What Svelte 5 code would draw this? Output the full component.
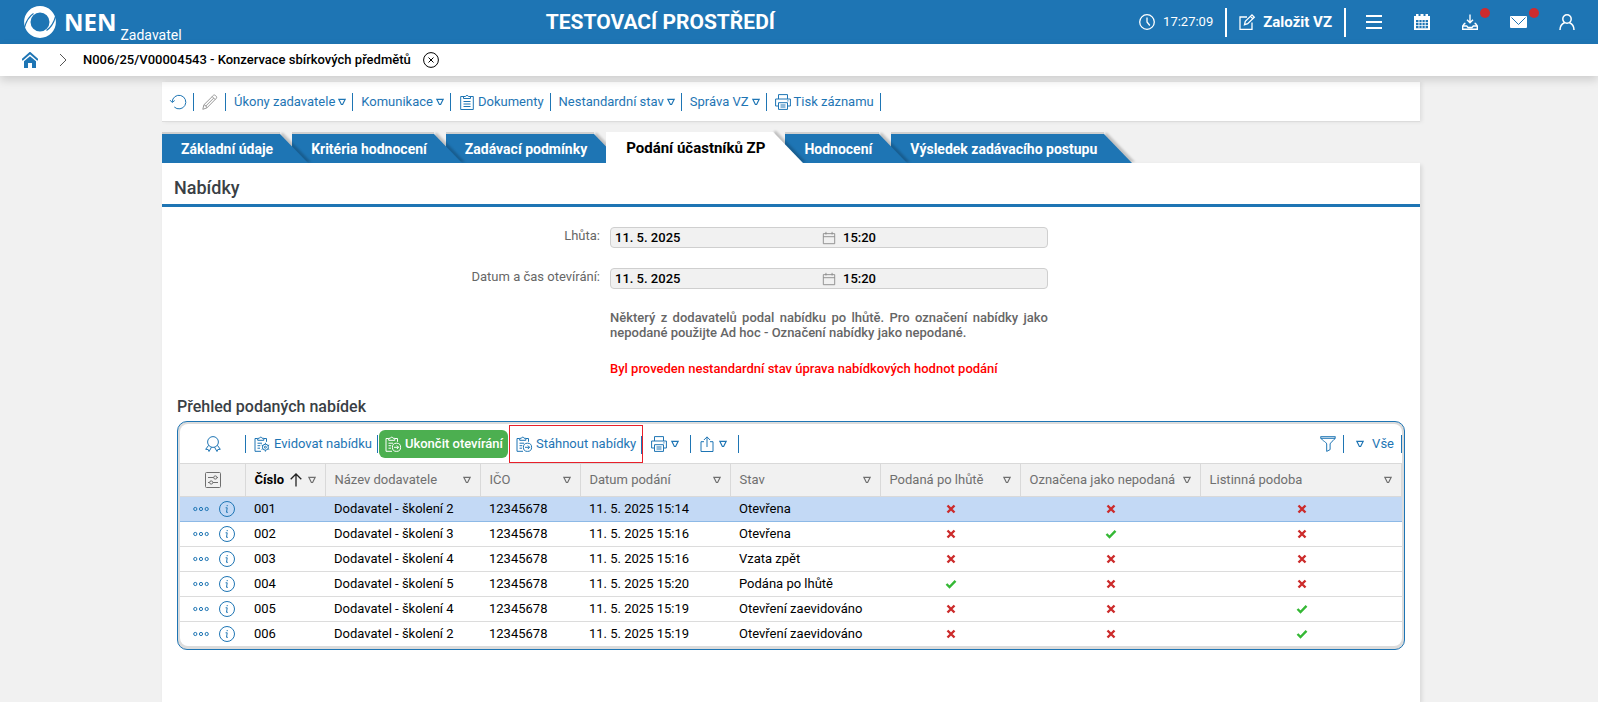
<script>
  const tabs = [
    { label: 'Základní údaje' },
    { label: 'Kritéria hodnocení' },
    { label: 'Zadávací podmínky' },
    { label: 'Podání účastníků ZP', active: true },
    { label: 'Hodnocení' },
    { label: 'Výsledek zadávacího postupu' }
  ];

  const actions = [
    { label: 'Úkony zadavatele', menu: true },
    { label: 'Komunikace', menu: true },
    { label: 'Dokumenty', icon: 'clipboard' },
    { label: 'Nestandardní stav', menu: true },
    { label: 'Správa VZ', menu: true },
    { label: 'Tisk záznamu', icon: 'printer' }
  ];

  const fields = [
    { id: 'lhuta', label: 'Lhůta:', date: '11. 5. 2025', time: '15:20' },
    { id: 'otevirani', label: 'Datum a čas otevírání:', date: '11. 5. 2025', time: '15:20' }
  ];

  const columns = [
    { label: 'Číslo', sorted: true },
    { label: 'Název dodavatele' },
    { label: 'IČO' },
    { label: 'Datum podání' },
    { label: 'Stav' },
    { label: 'Podaná po lhůtě' },
    { label: 'Označena jako nepodaná' },
    { label: 'Listinná podoba' }
  ];

  const rows = [
    { no: '001', name: 'Dodavatel - školení 2', ico: '12345678', date: '11. 5. 2025 15:14', state: 'Otevřena', flags: [false, false, false] },
    { no: '002', name: 'Dodavatel - školení 3', ico: '12345678', date: '11. 5. 2025 15:16', state: 'Otevřena', flags: [false, true, false] },
    { no: '003', name: 'Dodavatel - školení 4', ico: '12345678', date: '11. 5. 2025 15:16', state: 'Vzata zpět', flags: [false, false, false] },
    { no: '004', name: 'Dodavatel - školení 5', ico: '12345678', date: '11. 5. 2025 15:20', state: 'Podána po lhůtě', flags: [true, false, false] },
    { no: '005', name: 'Dodavatel - školení 4', ico: '12345678', date: '11. 5. 2025 15:19', state: 'Otevření zaevidováno', flags: [false, false, true] },
    { no: '006', name: 'Dodavatel - školení 2', ico: '12345678', date: '11. 5. 2025 15:19', state: 'Otevření zaevidováno', flags: [false, false, true] }
  ];

  let selected = $state('001');
</script>

{#snippet tri()}
  <svg class="tri" viewBox="0 0 8 8" width="8" height="8"><path d="M.8 1.300h6.400L4.600 6.500H3.400z" /></svg>
{/snippet}

{#snippet icon(name)}
  <svg class="icon" viewBox="0 0 16 16" width="16" height="16">
    {#if name === 'clipboard'}
      <path d="M5 2.500H1.700v13h12.600v-13H11M4.500 4.500v-2h2a1.600 1.600 0 0 1 3 0h2v2zM4.500 7.500h7M4.500 10h7M4.500 12.500h7" />
    {:else if name === 'printer'}
      <path d="M3.500 5V.6h9V5M3.500 12H.6V5h14.800v7h-2.900M3.500 8.700h9v6.700h-9zM5.500 11h5M5.500 13h5M12.300 6.900h1.200" />
    {:else if name === 'clip-gear'}
      <path d="M3.500 2.500H1v12.800h6M10 2.500h2.500v3.300M3.700 4.300v-2h1.600a1.500 1.500 0 0 1 2.900 0h1.600v2zM3.500 7.200h4.500M3.500 9.700h2.800M3.500 12.200h2.500" />
      <circle cx="11.400" cy="11.200" r="3" /><circle cx="11.400" cy="11.200" r="1" />
      <path d="M11.400 8.200V6.800M11.400 15.600v-1.400M8.800 9.700l-1.200-.7M15.200 13.400l-1.200-.7M8.800 12.700l-1.200.7M15.200 9l-1.200.7" />
    {:else if name === 'clip-arrow'}
      <path d="M3.500 2.500H1v12.800h6M10 2.500h2.500v3.300M3.700 4.300v-2h1.600a1.500 1.500 0 0 1 2.900 0h1.600v2zM3.500 7.200h4.500M3.500 9.700h2.800M3.500 12.200h2.500" />
      <circle cx="11.500" cy="11.300" r="4.100" /><path d="M9 11.300h4.500M11.800 9.500l1.800 1.800-1.800 1.800" />
    {:else if name === 'medal'}
      <circle cx="8" cy="6" r="5.400" />
      <path d="M3.600 9.300.7 13.300l2.500.2.800 2 2.500-4.300M12.400 9.300l2.900 4-2.500.2-.8 2-2.500-4.300" />
    {:else if name === 'share'}
      <path d="M5 5.700H2v9.800h12V5.700h-3M8 11V.9M4.900 4 8 .9 11.100 4" />
    {:else if name === 'filter'}
      <path d="M.6.7h14.800c0 3.600-4.600 4.700-5.300 7.200v5.700l-3.400 1.800V7.900C6 5.400.6 4.300.6.7zM.6 2.300h14.800" />
    {:else if name === 'refresh'}
      <path d="M2.200 8A6.800 6.800 0 1 1 4.300 13M.1 6.200l2.100 2.300 2.500-2" />
    {:else if name === 'pencil'}
      <path d="M.8 15.300l1.100-4.500L11.600 1.200c1-1 3.900 1.600 2.900 2.900L4.900 13.900zM10.200 2.600l3 3M1.900 10.800c1.500.3 2.700 1.500 3 3.100M3.500 12.300l8.200-8.200" />
    {:else if name === 'settings'}
      <rect x=".5" y=".5" width="15" height="15" rx="1" />
      <path d="M3 5.500h5.700M12 5.500h1M3 10.500h1.500M8 10.500h5" />
      <circle cx="10.300" cy="5.500" r="1.600" /><circle cx="6.200" cy="10.500" r="1.600" />
    {:else if name === 'info'}
      <circle cx="8" cy="8" r="7.500" />
      <path d="M6.600 6.800h1.600l-.7 4.500h1.400M8.200 4v1.200" />
    {:else if name === 'dots'}
      <circle cx="2.300" cy="8" r="1.600" /><circle cx="8" cy="8" r="1.600" /><circle cx="13.700" cy="8" r="1.600" />
    {:else if name === 'calendar'}
      <path d="M1.500 3h13v11.500h-13zM1.500 6.500h13M4.500 1v3M11.500 1v3" />
    {:else if name === 'clock'}
      <circle cx="8" cy="8" r="7.300" stroke-width="1.300" /><path d="M8 3.500V8l2.800 3.500" stroke-width="1.300" />
    {:else if name === 'edit'}
      <path stroke-width="1.300" d="M8 3H1v12.300h12V8.500M5.500 10.700l.8-3.300L13 .9l2.300 2.300-6.600 6.500zM11.500 2.400l2.300 2.300" />
    {:else if name === 'close'}
      <circle cx="8" cy="8" r="7.400" /><path d="M5.500 5.500l5 5M10.500 5.500l-5 5" />
    {:else if name === 'download'}
      <path stroke-width="1.400" d="M8 .5v8M5 5.700l3 3 3-3M3.500 9.500h-1L.7 12v3.300h14.600V12l-1.800-2.500h-1M.7 12h4l1.300 1.500h4L11.300 12h4" />
    {:else if name === 'user'}
      <path stroke-width="1.500" d="M8 .8a4.200 4.200 0 1 1 0 8.400a4.200 4.200 0 1 1 0-8.400M1 16c0-4 2.500-6.300 4.500-7.200M15 16c0-4-2.500-6.300-4.500-7.200" />
    {/if}
  </svg>
{/snippet}

<header>
  <a class="brand" href="#home">
    <svg class="logo" viewBox="0 0 32 32" width="32" height="32">
      <circle cx="16" cy="16" r="12.700" stroke="#fff" stroke-width="6.400" />
      <path d="M0 23C1.500 17 4 11 9.500 7.500M32 9C30.500 15 28 21 22.500 24.500" stroke="#1e75b4" stroke-width="1.200" />
    </svg>
    <strong>NEN</strong><span>Zadavatel</span>
  </a>
  <h1>TESTOVACÍ PROSTŘEDÍ</h1>
  <nav class="tools" aria-label="Nástroje">
    <span class="clock">{@render icon('clock')}17:27:09</span>
    <button class="create">{@render icon('edit')}Založit VZ</button>
    <button class="tool" aria-label="Menu">
      <svg viewBox="0 0 16 16" width="16" height="16" class="solid"><path d="M0 1h16v2H0zM0 7h16v2H0zM0 13h16v2H0z" /></svg>
    </button>
    <button class="tool" aria-label="Kalendář">
      <svg viewBox="0 0 16 16" width="16" height="16" class="solid"><path fill-rule="evenodd" d="M0 2h2V0h2.500v2h2V0h3v2h2V0H14v2h2v14H0zM2 6v8.300h12V6z" /><path d="M2 8.300h12v.8H2zM2 11h12v.8H2zM4.500 6h.9v8.300h-.9zM7.600 6h.9v8.300h-.9zM10.700 6h.9v8.300h-.9z" /></svg>
    </button>
    <button class="tool" aria-label="Stažené">{@render icon('download')}<i class="dot"></i></button>
    <button class="tool" aria-label="Zprávy">
      <svg viewBox="0 0 17 16" width="17" height="16"><rect x="0" y="2" width="17" height="12" rx="1" fill="#fff" /><path d="M1.500 3.500l7 7 7-7" fill="none" stroke="#1e75b4" /></svg><i class="dot"></i>
    </button>
    <button class="tool" aria-label="Uživatel">{@render icon('user')}</button>
  </nav>
</header>

<nav class="crumbs" aria-label="Cesta">
  <a href="#home" aria-label="Domů">
    <svg viewBox="0 0 16 16" width="16" height="16"><path d="M0 8 8 1l8 7" fill="none" stroke="#1e75b4" stroke-width="2" /><path d="M2 9.300 8 4.200l6 5.100V16h-4v-5H6v5H2z" fill="#1e75b4" /></svg>
  </a>
  <svg class="chev" viewBox="0 0 8 14" width="8" height="14"><path d="M1 1l6 6-6 6" /></svg>
  <strong>N006/25/V00004543 - Konzervace sbírkových předmětů</strong>
  <button aria-label="Zavřít">{@render icon('close')}</button>
</nav>

<main>
  <div class="actions">
    <button class="item" aria-label="Obnovit">{@render icon('refresh')}</button>
    <button class="item muted" aria-label="Upravit">{@render icon('pencil')}</button>
    {#each actions as a}
      <button class="item text">{#if a.icon}{@render icon(a.icon)}{/if}{a.label}{#if a.menu}{@render tri()}{/if}</button>
    {/each}
  </div>

  <div class="tabs" role="tablist">
    {#each tabs as t, i}
      <button role="tab" aria-selected={!!t.active} class:active={t.active} style="z-index: {t.active ? 10 : 6 - i}">
        <svg viewBox="0 0 30 29" preserveAspectRatio="none"><path d="M0 0H2L30 29H0z" /></svg><span>{t.label}</span>
      </button>
    {/each}
  </div>

  <section class="panel">
    <h2>Nabídky</h2>
    <form class="form">
      {#each fields as f}
        <label for={f.id}>{f.label}</label>
        <div class="field">
          <input id={f.id} value={f.date} readonly />
          {@render icon('calendar')}
          <input class="time" aria-label="Čas" value={f.time} readonly />
        </div>
      {/each}
      <p class="note">Některý z dodavatelů podal nabídku po lhůtě. Pro označení nabídky jako nepodané použijte Ad hoc - Označení nabídky jako nepodané.</p>
      <p class="warn">Byl proveden nestandardní stav úprava nabídkových hodnot podání</p>
    </form>

    <h3>Přehled podaných nabídek</h3>
    <div class="grid">
      <div class="inner">
        <div class="bar">
          <button class="item first" aria-label="Certifikát">{@render icon('medal')}</button>
          <button class="item tight">{@render icon('clip-gear')}Evidovat nabídku</button>
          <button class="primary">{@render icon('clip-arrow')}Ukončit otevírání</button>
          <button class="item marked">{@render icon('clip-arrow')}Stáhnout nabídky</button>
          <button class="item wide" aria-label="Tisk">{@render icon('printer')}{@render tri()}</button>
          <button class="item wide" aria-label="Export">{@render icon('share')}{@render tri()}</button>
          <span class="spacer"></span>
          <button class="item" aria-label="Filtr">{@render icon('filter')}</button>
          <button class="item all">{@render tri()}Vše</button>
        </div>
        <table>
          <colgroup>
            <col class="w65" /><col class="w80" /><col class="w155" /><col class="w100" /><col class="w150" /><col class="w150" /><col class="w140" /><col class="w180" /><col />
          </colgroup>
          <thead>
            <tr>
              <th class="mid"><button aria-label="Nastavení sloupců">{@render icon('settings')}</button></th>
              {#each columns as c}
                <th class:sorted={c.sorted}>
                  <div class="head">
                    <span>{c.label}</span>
                    {#if c.sorted}<svg class="arrow" viewBox="0 0 12 14" width="12" height="14"><path d="M6 13.500V1M.7 6.300 6 1l5.300 5.300" /></svg>{/if}
                    {@render tri()}
                  </div>
                </th>
              {/each}
            </tr>
          </thead>
          <tbody>
            {#each rows as r}
              <tr class:selected={selected === r.no} onclick={() => (selected = r.no)}>
                <td class="mid">
                  <div class="ops">
                    <button aria-label="Akce">{@render icon('dots')}</button>
                    <button aria-label="Detail">{@render icon('info')}</button>
                  </div>
                </td>
                <td>{r.no}</td><td>{r.name}</td><td>{r.ico}</td><td>{r.date}</td><td>{r.state}</td>
                {#each r.flags as on}
                  <td class="mid">
                    {#if on}
                      <svg class="flag yes" viewBox="0 0 12 10" width="12" height="10" role="img" aria-label="Ano"><path d="M1.500 5l3 3 6-6.200" /></svg>
                    {:else}
                      <svg class="flag no" viewBox="0 0 12 10" width="12" height="10" role="img" aria-label="Ne"><path d="M2.500 1.500l7 7M9.500 1.500l-7 7" /></svg>
                    {/if}
                  </td>
                {/each}
              </tr>
            {/each}
          </tbody>
        </table>
      </div>
    </div>
  </section>
</main>

<style>
  :global(body) {
    margin: 0;
    background: #f1f1f1;
    font: 13px/16px Roboto, 'Liberation Sans', sans-serif;
    color: #000;
  }
  :global(#app) {
    display: flex;
    flex-direction: column;
    min-height: 100vh;
  }
  button {
    font: inherit;
    color: inherit;
    background: none;
    border: 0;
    padding: 0;
    margin: 0;
    cursor: pointer;
    white-space: nowrap;
  }
  svg {
    display: block;
    flex: none;
  }
  .icon {
    fill: none;
    stroke: currentColor;
    overflow: visible;
  }
  .solid {
    fill: #fff;
  }
  .tri {
    fill: none;
    stroke: currentColor;
    stroke-width: 1.2;
  }

  header {
    display: flex;
    align-items: center;
    justify-content: space-between;
    height: 44px;
    padding: 0 23px 0 24px;
    background: #1e75b4;
    color: #fff;
  }
  .brand {
    display: flex;
    align-items: center;
    height: 44px;
    color: #fff;
    text-decoration: none;
  }
  .logo {
    fill: none;
  }
  .brand strong {
    margin-left: 8px;
    font: 700 24px/44px 'Open Sans', sans-serif;
  }
  .brand span {
    align-self: flex-end;
    padding-bottom: 1px;
    margin-left: 4px;
    font-size: 14px;
  }
  h1 {
    margin: 0;
    font-size: 21px;
    font-weight: 700;
  }
  .tools {
    display: flex;
    align-items: center;
  }
  .clock,
  .create {
    display: flex;
    align-items: center;
    gap: 8px;
    height: 29px;
    padding-right: 12px;
    border-right: 2px solid #fff;
  }
  .create {
    padding-left: 12px;
    margin-right: 20px;
    font-size: 15px;
    font-weight: 700;
  }
  .tool {
    position: relative;
    margin-right: 32px;
  }
  .tool:last-child {
    margin-right: 0;
  }
  .dot {
    position: absolute;
    top: -6px;
    right: -12px;
    width: 10px;
    height: 10px;
    border-radius: 50%;
    background: #cd2b2e;
  }

  .crumbs {
    position: relative;
    display: flex;
    align-items: center;
    height: 32px;
    padding-left: 22px;
    background: #fff;
    box-shadow: 0 4px 10px rgba(0, 0, 0, 0.15);
  }
  .crumbs strong {
    font-weight: 500;
  }
  .chev {
    margin: 0 16px 0 21px;
    fill: none;
    stroke: #555;
  }
  .crumbs button {
    margin-left: 12px;
  }

  main {
    flex: 1;
    display: flex;
    flex-direction: column;
    padding: 6px 178px 0 162px;
  }
  .actions {
    display: flex;
    align-items: center;
    height: 39px;
    background: #fff;
    border-bottom: 1px solid #dcdcdc;
    box-shadow: 2px 0 4px rgba(0, 0, 0, 0.08);
  }
  .item {
    position: relative;
    display: flex;
    align-items: center;
    gap: 4px;
    height: 18px;
    padding: 0 7px 0 8px;
    border-right: 1px solid #1e75b4;
    color: #1e75b4;
  }
  .actions .text {
    gap: 3px;
    padding-right: 6px;
  }
  .muted .icon {
    stroke: #999;
  }

  .tabs {
    display: flex;
    align-items: flex-end;
    height: 31px;
    margin-top: 10px;
  }
  .tabs button {
    position: relative;
    height: 29px;
    padding: 0 7px 0 19px;
    margin-right: 12px;
    background: #1e75b4;
    color: #fff;
    font-size: 14px;
    font-weight: 700;
    box-shadow: 0 -2px 0 #d0d0d0;
  }
  .tabs svg {
    position: absolute;
    left: calc(100% - 2px);
    top: 0;
    width: 30px;
    height: 100%;
    fill: #1e75b4;
    overflow: visible;
    filter: drop-shadow(3px -1px 1px rgba(0, 0, 0, 0.2));
    clip-path: inset(-3px -12px 0 0);
  }
  .tabs span {
    position: relative;
  }
  .tabs .active {
    height: 31px;
    background: #fff;
    color: #000;
    box-shadow: none;
    font-size: 15px;
    padding: 0 8px 0 20px;
  }
  .tabs .active svg {
    fill: #fff;
    width: 32px;
  }

  .panel {
    flex: 1;
    background: #fff;
    box-shadow: 2px 2px 4px rgba(0, 0, 0, 0.1);
    padding-bottom: 48px;
  }
  h2 {
    margin: 0;
    padding: 14px 12px 6px;
    font-size: 18px;
    line-height: 21px;
    font-weight: 500;
    color: #3a3f45;
    border-bottom: 3px solid #1e75b4;
  }
  .form {
    display: grid;
    grid-template-columns: 438px 438px;
    column-gap: 10px;
    row-gap: 20px;
    padding-top: 20px;
    color: #666;
  }
  .form label {
    text-align: right;
    line-height: 18px;
  }
  .field {
    display: flex;
    align-items: center;
    height: 19px;
    background: #f1f1f1;
    border: 1px solid #cfcfcf;
    border-radius: 4px;
    color: #888;
  }
  .field input {
    flex: 1;
    min-width: 0;
    padding: 0 4px;
    border: 0;
    background: none;
    font: inherit;
    font-weight: 500;
    color: #000;
    outline: none;
  }
  .field .time {
    padding: 0 1px 0 7px;
  }
  .field .icon {
    width: 14px;
    height: 14px;
  }
  .form p {
    grid-column: 2;
    margin: 0;
    font-weight: 500;
    line-height: 15px;
  }
  .form .note {
    padding: 1px 0;
    text-align: justify;
  }
  .form .warn {
    color: #f00;
    white-space: nowrap;
  }

  h3 {
    margin: 21px 15px 4px;
    font-size: 16px;
    line-height: 20px;
    font-weight: 500;
    color: #3a3f45;
  }
  .grid {
    margin: 0 15px;
    border: 1px solid #1e75b4;
    border-radius: 10px;
    background: #dcdcdc;
    padding: 2px 2px 3px;
  }
  .inner {
    border-radius: 8px;
    overflow: hidden;
    background: #fff;
  }
  .bar {
    display: flex;
    align-items: center;
    height: 39px;
  }
  .bar .first {
    width: 66px;
    padding: 0;
    justify-content: center;
  }
  .bar .tight {
    padding-right: 5px;
  }
  .bar .wide {
    padding-right: 11px;
  }
  .primary {
    display: flex;
    align-items: center;
    gap: 4px;
    height: 28px;
    padding: 0 5px 0 6px;
    margin: 0 1px;
    border-radius: 6px;
    background: #4caf50;
    color: #fff;
    font-weight: 500;
  }
  .bar .marked {
    height: 38px;
    padding: 0 6px;
    border: 1px solid #e8202a;
  }
  .marked::after {
    content: '';
    position: absolute;
    right: 0;
    top: 10px;
    width: 1px;
    height: 18px;
    background: #1e75b4;
  }
  .spacer {
    flex: 1;
  }
  .bar .all {
    gap: 8px;
    padding-left: 12px;
  }

  table {
    width: 100%;
    table-layout: fixed;
    border-collapse: collapse;
  }
  .w65 { width: 65px; }
  .w80 { width: 80px; }
  .w100 { width: 100px; }
  .w140 { width: 140px; }
  .w150 { width: 150px; }
  .w155 { width: 155px; }
  .w180 { width: 180px; }
  th,
  td {
    padding: 0 9px;
    text-align: left;
    white-space: nowrap;
  }
  th {
    height: 32px;
    background: #f1f1f1;
    border: 1px solid #d9d9d9;
    border-left: 0;
    color: #6f6f6f;
    font-weight: 400;
  }
  .head {
    display: flex;
    align-items: center;
  }
  .head .tri {
    margin-left: auto;
  }
  .sorted span {
    color: #000;
    font-weight: 700;
  }
  .arrow {
    margin-left: 6px;
    fill: none;
    stroke: #222;
    stroke-width: 1.3;
  }
  td {
    height: 24px;
    border-bottom: 1px solid #dcdcdc;
  }
  tbody tr:last-child td {
    border-bottom: 0;
  }
  .selected td {
    background: #c3d9f5;
    border-bottom-color: #8db9e6;
  }
  th.mid,
  td.mid {
    text-align: center;
    padding: 0 0 0 2px;
  }
  .mid button {
    display: inline-block;
    vertical-align: middle;
  }
  .ops {
    display: flex;
    justify-content: center;
    gap: 10px;
    color: #1e75b4;
  }
  .flag {
    margin: 0 auto;
    fill: none;
    stroke-width: 2.4;
  }
  .yes {
    stroke: #35b835;
  }
  .no {
    stroke: #cc2b2b;
  }
</style>
